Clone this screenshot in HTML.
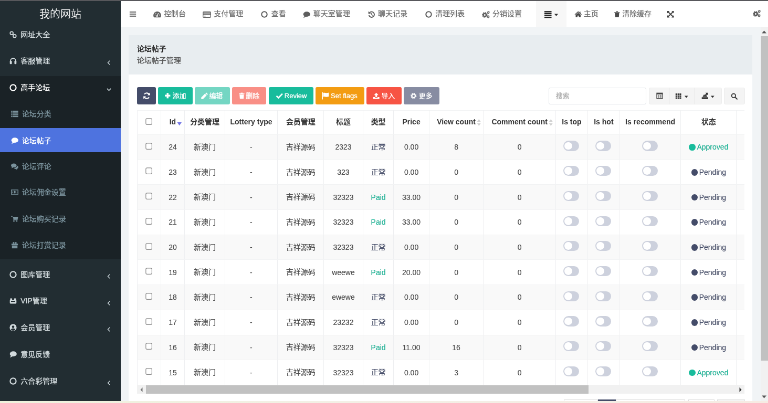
<!DOCTYPE html>
<html lang="zh-CN"><head><meta charset="utf-8"><title>我的网站</title>
<style>
*{box-sizing:border-box;margin:0;padding:0}
html,body{width:768px;height:403px;overflow:hidden;background:#fff}
body{font-family:"Liberation Sans","Noto Sans CJK SC",sans-serif;font-size:14px;color:#444;position:relative;text-shadow:0 0 0.9px currentColor}
#topline{position:absolute;left:0;top:0;width:768px;height:1px;background:#58585c;z-index:5}
#bottom{position:absolute;left:0;top:400.7px;width:768px;height:2.3px;background:linear-gradient(90deg,#eef1dc 0%,#f3f0e6 45%,#f6ebe3 100%);z-index:5}
#w{position:absolute;left:0;top:1px;width:1462.86px;height:761.4px;transform:scale(0.525);transform-origin:0 0;overflow:hidden;background:#f1f4f6;will-change:transform}
.i{display:block;position:absolute}
.abs{position:absolute;white-space:nowrap}
#side{position:absolute;left:0;top:0;width:230px;height:761.4px;background:#222d32;overflow:hidden}
#logo{position:absolute;left:0;top:0;width:230px;height:50px;line-height:50px;text-align:center;color:#fff;font-size:20px;font-weight:300}
#sub{position:absolute;left:0;width:230px;background:#1a2226}
#act{position:absolute;left:0;width:230px;background:#4e73df}
.m{position:absolute;left:0;width:230px;height:20px;line-height:20px;font-size:14px;color:#cfd8dc}
.m .t{position:absolute;left:39.2px;top:0;white-space:nowrap}
.m .i{left:18.3px;top:3px}
.m .ch{left:200px;top:4px;color:#b8c7ce}
.s{color:#7a929c}
.s .t{left:41.7px}
.s .i{left:21px}
#nav{position:absolute;left:230px;top:0;width:1233px;height:50px;background:#fff}
#nav .n{position:absolute;top:14.3px;height:20px;line-height:20px;color:#6e6e6e;text-shadow:0 0 0.7px #888;font-size:14px;white-space:nowrap}
#nav .i{top:18px;color:#5e5e5e}
#vs{position:absolute;top:50px;background:#f1f1f1}
#panel{position:absolute;background:#fff}
#ph{position:absolute;left:0;top:0;width:100%;background:#e8edf0}
.btn{position:absolute;border-radius:3px;color:#fff;font-size:13px;line-height:20px;white-space:nowrap}
.btn .t{position:absolute;top:6.8px}
.btn .i{top:10px}
.tb{position:absolute;background:#f4f4f4;border:1px solid #ececec;color:#333}
table{border-collapse:collapse;table-layout:fixed;position:absolute}
th,td{border:1px solid #eeeff1;border-top-color:#f2f3f4;border-bottom-color:#f2f3f4;text-align:center;vertical-align:middle;white-space:nowrap;overflow:hidden;font-size:14px;padding:0;position:relative}
th{font-weight:bold;color:#333;background:#fff;padding-bottom:3px;text-shadow:none}
td .cb{top:-3.2px}
.hs{position:relative;display:inline-block}
.c{position:relative;top:-1.4px}
td{color:#4d4d4d;text-shadow:0 0 0.5px #999}
tr.o td{background:#f9f9f9}
tr.e td{background:#fff}
.cb{display:inline-block;vertical-align:middle;position:relative;top:-2px}
.tg{display:inline-block;width:30.5px;height:19.2px;border-radius:10px;background:#cdd1dd;position:relative;vertical-align:middle;top:-2.2px;left:-0.8px}
.tg b{position:absolute;left:2.2px;top:2.2px;width:14.8px;height:14.8px;border-radius:50%;background:#fff}
.dot{display:inline-block;width:12.6px;height:12.6px;border-radius:50%;vertical-align:middle;margin-right:2.6px;position:relative;top:-1px}
.ok{color:#18bc9c}.ok .dot{background:#18bc9c}
.pd{color:#444c69}.pd .dot{background:#444c69}
.nm{color:#444c69}.paid{color:#18bc9c}
.so{display:inline-block;position:relative;width:0;height:0}
</style></head><body>
<div id="topline"></div><div id="bottom"></div>
<div id="w">

<div id="side">
<div id="logo">我的网站</div>
<div id="sub" style="top:142.67px;height:348.95px"></div>
<div id="act" style="top:242.29px;height:45.9px"></div>
<div class="m" style="top:54.0px;color:#d2dadd"><svg class="i" width="14" height="14" viewBox="0 0 16 16" style=""><g fill="none" stroke="currentColor" stroke-width="2"><circle cx="4.8" cy="4.8" r="3.3"/><circle cx="11.2" cy="11.2" r="3.3"/><path d="M6.5 6.5L9.5 9.5"/></g></svg><span class="t">网址大全</span></div>
<div class="m" style="top:104.29px;color:#d2dadd"><svg class="i" width="14" height="14" viewBox="0 0 16 16" style=""><path d="M2.3 11V8.2a5.7 5.7 0 0 1 11.4 0V11" fill="none" stroke="currentColor" stroke-width="2.2"/><rect x="0.8" y="8.2" width="4.4" height="6.8" rx="1.2" fill="currentColor"/><rect x="10.8" y="8.2" width="4.4" height="6.8" rx="1.2" fill="currentColor"/></svg><span class="t">客服管理</span><svg class="i" width="13" height="13" viewBox="0 0 16 16" style="left:200.8px;top:7.2px;color:#c5d0d5"><path d="M10 3.5L5.5 8L10 12.5" fill="none" stroke="currentColor" stroke-width="1.8"/></svg></div>
<div class="m" style="top:155.14px;color:#fff"><svg class="i" width="14" height="14" viewBox="0 0 16 16" style=""><circle cx="8" cy="8" r="6.4" fill="none" stroke="currentColor" stroke-width="2.5"/></svg><span class="t">高手论坛</span><svg class="i" width="13" height="13" viewBox="0 0 16 16" style="left:200.8px;top:7.2px;color:#c5d0d5"><path d="M3.5 6L8 10.5L12.5 6" fill="none" stroke="currentColor" stroke-width="1.8"/></svg></div>
<div class="m" style="top:510.57000000000005px;color:#d2dadd"><svg class="i" width="14" height="14" viewBox="0 0 16 16" style=""><circle cx="8" cy="8" r="6.4" fill="none" stroke="currentColor" stroke-width="2.5"/></svg><span class="t">图库管理</span><svg class="i" width="13" height="13" viewBox="0 0 16 16" style="left:200.8px;top:7.2px;color:#c5d0d5"><path d="M10 3.5L5.5 8L10 12.5" fill="none" stroke="currentColor" stroke-width="1.8"/></svg></div>
<div class="m" style="top:561.43px;color:#d2dadd"><svg class="i" width="14" height="14" viewBox="0 0 16 16" style=""><g fill="currentColor"><rect x="0.8" y="6" width="14.4" height="8.2" rx="1.6"/><rect x="1.6" y="2.8" width="4.2" height="4"/><rect x="10.2" y="2.8" width="4.2" height="4"/></g><rect x="3.4" y="8" width="9.2" height="2.4" fill="#222d32"/></svg><span class="t">VIP管理</span><svg class="i" width="13" height="13" viewBox="0 0 16 16" style="left:200.8px;top:7.2px;color:#c5d0d5"><path d="M10 3.5L5.5 8L10 12.5" fill="none" stroke="currentColor" stroke-width="1.8"/></svg></div>
<div class="m" style="top:611.71px;color:#d2dadd"><svg class="i" width="14" height="14" viewBox="0 0 16 16" style=""><circle cx="8" cy="8" r="7.6" fill="currentColor"/><circle cx="8" cy="6.3" r="2.7" fill="#222d32"/><path d="M3.2 12.6a4.9 3.6 0 0 1 9.6 0a6.4 6.4 0 0 1 -9.6 0z" fill="#222d32"/></svg><span class="t">会员管理</span><svg class="i" width="13" height="13" viewBox="0 0 16 16" style="left:200.8px;top:7.2px;color:#c5d0d5"><path d="M10 3.5L5.5 8L10 12.5" fill="none" stroke="currentColor" stroke-width="1.8"/></svg></div>
<div class="m" style="top:662.57px;color:#d2dadd"><svg class="i" width="14" height="14" viewBox="0 0 16 16" style=""><g fill="currentColor"><ellipse cx="8.3" cy="7" rx="7.5" ry="5.6"/><path d="M3.5 10.5L1 15L7.5 12.2z"/></g></svg><span class="t">意见反馈</span></div>
<div class="m" style="top:714.19px;color:#d2dadd"><svg class="i" width="14" height="14" viewBox="0 0 16 16" style=""><circle cx="8" cy="8" r="6.4" fill="none" stroke="currentColor" stroke-width="2.5"/></svg><span class="t">六合彩管理</span><svg class="i" width="13" height="13" viewBox="0 0 16 16" style="left:200.8px;top:7.2px;color:#c5d0d5"><path d="M10 3.5L5.5 8L10 12.5" fill="none" stroke="currentColor" stroke-width="1.8"/></svg></div>
<div class="m s" style="top:205.05px;"><svg class="i" width="14" height="14" viewBox="0 0 16 16" style=""><g fill="currentColor"><rect x="0.3" y="1.0" width="3" height="2.6"/><rect x="4.6" y="1.0" width="11.1" height="2.6"/><rect x="0.3" y="4.8" width="3" height="2.6"/><rect x="4.6" y="4.8" width="11.1" height="2.6"/><rect x="0.3" y="8.6" width="3" height="2.6"/><rect x="4.6" y="8.6" width="11.1" height="2.6"/><rect x="0.3" y="12.4" width="3" height="2.6"/><rect x="4.6" y="12.4" width="11.1" height="2.6"/></g></svg><span class="t">论坛分类</span></div>
<div class="m s" style="top:255.51999999999998px;color:#fff"><svg class="i" width="14" height="14" viewBox="0 0 16 16" style=""><g fill="currentColor"><ellipse cx="8.3" cy="7" rx="7.5" ry="5.6"/><path d="M3.5 10.5L1 15L7.5 12.2z"/></g></svg><span class="t">论坛帖子</span></div>
<div class="m s" style="top:305.24px;"><svg class="i" width="14" height="14" viewBox="0 0 16 16" style=""><g fill="currentColor"><ellipse cx="6" cy="6" rx="6" ry="4.4"/><path d="M2.5 8.5L0.8 12.3L5.5 10z"/><path d="M13.2 6.2a5 3.9 0 0 1 -0.8 7.2L13.5 15.5L9.8 13.6a5.6 3.9 0 0 1 -3.5-2.2a7.5 5.5 0 0 0 6.9-5.2z"/></g></svg><span class="t">论坛评论</span></div>
<div class="m s" style="top:354.38px;"><svg class="i" width="14" height="14" viewBox="0 0 16 16" style=""><rect x="0.8" y="3.3" width="14.4" height="9.4" fill="none" stroke="currentColor" stroke-width="1.6"/><ellipse cx="8" cy="8" rx="2.1" ry="2.8" fill="currentColor"/><rect x="2" y="6.8" width="1.6" height="2.4" fill="currentColor"/><rect x="12.4" y="6.8" width="1.6" height="2.4" fill="currentColor"/></svg><span class="t">论坛佣金设置</span></div>
<div class="m s" style="top:405.43px;"><svg class="i" width="14" height="14" viewBox="0 0 16 16" style=""><g fill="currentColor"><path d="M0 1.8h3.2l0.5 1.7H15.6l-1.4 6.2H5.6L3.8 3.2H0z"/><circle cx="6.2" cy="12.8" r="1.5"/><circle cx="12.4" cy="12.8" r="1.5"/><rect x="4.6" y="9.6" width="9.8" height="1.4"/></g></svg><span class="t">论坛购买记录</span></div>
<div class="m s" style="top:454.76px;"><svg class="i" width="14" height="14" viewBox="0 0 16 16" style=""><g fill="currentColor"><rect x="1" y="4.8" width="14" height="3.4"/><rect x="2" y="8.8" width="12" height="6.2"/><circle cx="5.6" cy="3" r="1.9"/><circle cx="10.4" cy="3" r="1.9"/></g></svg><span class="t">论坛打赏记录</span></div>
</div>
<div id="nav">
<svg class="i" width="14" height="14" viewBox="0 0 16 16" style="left:16.1px;top:18px;color:#777"><g fill="currentColor"><rect x="1" y="2.2" width="14" height="2.6"/><rect x="1" y="6.7" width="14" height="2.6"/><rect x="1" y="11.2" width="14" height="2.6"/></g></svg>
<svg class="i" width="15" height="15" viewBox="0 0 16 16" style="left:62.0px;top:18.0px"><path d="M8 2.2a7.8 7.8 0 0 0 -6.6 11.9h13.2A7.8 7.8 0 0 0 8 2.2z" fill="currentColor"/><path d="M7.6 11.4L10.4 5.4" stroke="#fff" stroke-width="1.5" fill="none"/><circle cx="7.6" cy="11.2" r="1.7" fill="#fff"/><circle cx="3.6" cy="9.2" r="0.9" fill="#fff"/><circle cx="5.2" cy="5.6" r="0.9" fill="#fff"/><circle cx="12.5" cy="9.2" r="0.9" fill="#fff"/></svg>
<span class="n" style="left:82.0px">控制台</span>
<svg class="i" width="16" height="16" viewBox="0 0 16 16" style="left:156.29px;top:17.5px"><rect x="0.8" y="2.6" width="14.4" height="10.8" rx="1.4" fill="none" stroke="currentColor" stroke-width="1.3"/><rect x="0.8" y="2.6" width="14.4" height="1.6" fill="currentColor"/><rect x="0.8" y="5.6" width="14.4" height="2.4" fill="currentColor"/><rect x="2.6" y="10" width="3" height="1.3" fill="currentColor"/></svg>
<span class="n" style="left:177.24px">支付管理</span>
<svg class="i" width="13" height="13" viewBox="0 0 16 16" style="left:266.76px;top:19.0px"><circle cx="8" cy="8" r="6.4" fill="none" stroke="currentColor" stroke-width="2.5"/></svg>
<span class="n" style="left:286.76px">查看</span>
<svg class="i" width="14" height="14" viewBox="0 0 16 16" style="left:347.14px;top:18.5px"><g fill="currentColor"><ellipse cx="8.3" cy="7" rx="7.5" ry="5.6"/><path d="M3.5 10.5L1 15L7.5 12.2z"/></g></svg>
<span class="n" style="left:366.76px">聊天室管理</span>
<svg class="i" width="13.5" height="13.5" viewBox="0 0 16 16" style="left:470.57px;top:18.75px"><path d="M3.6 3.6A6.2 6.2 0 1 1 2 9.6" fill="none" stroke="currentColor" stroke-width="2.3"/><path d="M0.6 0.8L1 6.8L6.8 5.4z" fill="currentColor"/><path d="M8.2 4.6V8.4L10.6 10" fill="none" stroke="currentColor" stroke-width="1.7"/></svg>
<span class="n" style="left:490.0px">聊天记录</span>
<svg class="i" width="13" height="13" viewBox="0 0 16 16" style="left:579.52px;top:19.0px"><circle cx="8" cy="8" r="6.4" fill="none" stroke="currentColor" stroke-width="2.5"/></svg>
<span class="n" style="left:599.14px">清理列表</span>
<svg class="i" width="15.5" height="15.5" viewBox="0 0 16 16" style="left:687.52px;top:17.75px"><circle cx="5.5" cy="8.8" r="2.95" fill="none" stroke="currentColor" stroke-width="2.6"/><circle cx="5.5" cy="8.8" r="4.7" fill="none" stroke="currentColor" stroke-width="1.6" stroke-dasharray="1.95 1.74"/><circle cx="12.5" cy="4" r="1.5" fill="none" stroke="currentColor" stroke-width="1.4"/><circle cx="12.5" cy="4" r="2.5" fill="none" stroke="currentColor" stroke-width="1" stroke-dasharray="1.35 1.27"/><circle cx="12.5" cy="12.3" r="1.5" fill="none" stroke="currentColor" stroke-width="1.4"/><circle cx="12.5" cy="12.3" r="2.5" fill="none" stroke="currentColor" stroke-width="1" stroke-dasharray="1.35 1.27"/></svg>
<span class="n" style="left:708.1px">分销设置</span>
<div class="abs" style="left:791.33px;top:0;width:58.1px;height:50px;background:#f7f7f7"></div>
<svg class="i" width="15.5" height="15.5" viewBox="0 0 16 16" style="left:805.62px;top:18.3px;color:#222"><g fill="currentColor"><rect x="1" y="1.2" width="14" height="2.5"/><rect x="1" y="4.9" width="14" height="2.5"/><rect x="1" y="8.6" width="14" height="2.5"/><rect x="1" y="12.3" width="14" height="2.5"/></g></svg>
<svg class="i" width="9" height="9" viewBox="0 0 16 16" style="left:825.12px;top:21.5px;color:#333"><path d="M1.5 4.5h13L8 12z" fill="currentColor"/></svg>
<svg class="i" width="14.5" height="14.5" viewBox="0 0 16 16" style="left:864.48px;top:18px;color:#444"><g fill="currentColor"><path d="M8 1.6L0.6 8.2L1.6 9.3L8 3.8L14.4 9.3L15.4 8.2L12.8 5.9V2.6h-1.8v1.7z"/><path d="M8 5L2.8 9.4V14.4h3.8v-3.6h2.8v3.6h3.8V9.4z"/></g></svg>
<span class="n" style="left:881.81px">主页</span>
<svg class="i" width="12.6" height="12.6" viewBox="0 0 16 16" style="left:939.33px;top:18.6px;color:#4a4a4a"><g fill="currentColor"><rect x="1.6" y="2.6" width="12.8" height="1.8"/><rect x="5.6" y="0.8" width="4.8" height="2.2"/><path d="M2.8 5.2h10.4l-0.8 10H3.6z"/></g></svg>
<span class="n" style="left:955.14px">清除缓存</span>
<svg class="i" width="14.5" height="14.5" viewBox="0 0 16 16" style="left:1039.71px;top:18px;color:#444"><g fill="currentColor"><path d="M1 1h5L4.3 2.7L8 6.4L11.7 2.7L10 1H15v5L13.3 4.3L9.6 8L13.3 11.7L15 10V15H10l1.7-1.7L8 9.6L4.3 13.3L6 15H1V10l1.7 1.7L6.4 8L2.7 4.3L1 6z"/></g></svg>
<svg class="i" width="15.5" height="15.5" viewBox="0 0 16 16" style="left:1204.29px;top:16.3px;color:#555"><circle cx="5.5" cy="8.8" r="2.95" fill="none" stroke="currentColor" stroke-width="2.6"/><circle cx="5.5" cy="8.8" r="4.7" fill="none" stroke="currentColor" stroke-width="1.6" stroke-dasharray="1.95 1.74"/><circle cx="12.5" cy="4" r="1.5" fill="none" stroke="currentColor" stroke-width="1.4"/><circle cx="12.5" cy="4" r="2.5" fill="none" stroke="currentColor" stroke-width="1" stroke-dasharray="1.35 1.27"/><circle cx="12.5" cy="12.3" r="1.5" fill="none" stroke="currentColor" stroke-width="1.4"/><circle cx="12.5" cy="12.3" r="2.5" fill="none" stroke="currentColor" stroke-width="1" stroke-dasharray="1.35 1.27"/></svg>
</div>
<div id="vs" style="left:1448.57px;width:14.29px;height:711.4px"></div>
<div class="abs" style="left:1449.33px;top:66.86px;width:20px;height:618.48px;background:#c1c1c1"></div>
<svg class="i" style="left:1451.43px;top:55.62px" width="9" height="6" viewBox="0 0 9 6"><path d="M0 5.5L4.5 0.5L9 5.5z" fill="#555"/></svg>
<svg class="i" style="left:1451.43px;top:751.05px" width="9" height="6" viewBox="0 0 9 6"><path d="M0 0.5L4.5 5.5L9 0.5z" fill="#555"/></svg>
<div id="panel" style="left:245.14px;top:64.76px;width:1187.43px;height:760px">
<div id="ph" style="height:74.86px"></div>
<div class="abs" style="left:15.62px;top:16.29px;line-height:20px;font-weight:bold;color:#2c2c2c;font-size:14px;text-shadow:none">论坛帖子</div>
<div class="abs" style="left:15.62px;top:38.19px;line-height:20px;color:#555;font-size:14px">论坛帖子管理</div>
<div class="btn" style="left:15.81px;top:99.62px;width:36.57px;height:33.14px;background:#444c69"><svg class="i" width="15.01" height="15.01" viewBox="0 0 16 16" style="left:10.87px;top:8.67px"><path d="M13.2 6.2A5.6 5.6 0 0 0 3.2 5" fill="none" stroke="currentColor" stroke-width="2.3"/><path d="M2.8 9.8A5.6 5.6 0 0 0 12.8 11" fill="none" stroke="currentColor" stroke-width="2.3"/><path d="M14.8 1.6V7H9.4z" fill="currentColor"/><path d="M1.2 14.4V9H6.6z" fill="currentColor"/></svg></div>
<div class="btn" style="left:56.19px;top:99.62px;width:66.1px;height:33.14px;background:#18bc9c"><svg class="i" width="12.47" height="12.47" viewBox="0 0 16 16" style="left:11.68px;top:9.94px"><g fill="currentColor"><rect x="5.8" y="1.4" width="4.4" height="13.2"/><rect x="1.4" y="5.8" width="13.2" height="4.4"/></g></svg><span class="t" style="left:27.24px">添加</span></div>
<div class="btn" style="left:126.29px;top:99.62px;width:66.67px;height:33.14px;background:#74d6c3"><svg class="i" width="15.24" height="15.24" viewBox="0 0 16 16" style="left:10.67px;top:8.55px"><g fill="currentColor"><path d="M11.4 1.2L14.8 4.6L13 6.4L9.6 3z"/><path d="M8.8 3.8L12.2 7.2L5 14.4L1.2 14.8L1.6 11z"/></g></svg><span class="t" style="left:27.05px">编辑</span></div>
<div class="btn" style="left:196.76px;top:99.62px;width:65.52px;height:33.14px;background:#f98f86"><svg class="i" width="12.86" height="12.86" viewBox="0 0 16 16" style="left:11.67px;top:9.74px"><g fill="currentColor"><rect x="1.6" y="2.6" width="12.8" height="1.8"/><rect x="5.6" y="0.8" width="4.8" height="2.2"/><path d="M2.8 5.2h10.4l-0.8 10H3.6z"/></g></svg><span class="t" style="left:26.29px">删除</span></div>
<div class="btn" style="left:266.67px;top:99.62px;width:84.76px;height:33.14px;background:#18bc9c"><svg class="i" width="14.42" height="14.42" viewBox="0 0 16 16" style="left:12.79px;top:8.96px"><path d="M1.8 8.6L6 12.6L14.4 4" fill="none" stroke="currentColor" stroke-width="3"/></svg><span class="t" style="left:30.09px">Review</span></div>
<div class="btn" style="left:355.43px;top:99.62px;width:93.33px;height:33.14px;background:#f39c12"><svg class="i" width="15.24" height="15.24" viewBox="0 0 16 16" style="left:11.43px;top:8.55px"><g fill="currentColor"><rect x="1.4" y="1" width="1.8" height="14.2"/><path d="M3.8 2.2c3-1.6 5 1.4 11.2-0.6v7.8c-6 2.2-8.2-1-11.2 0.8z"/></g></svg><span class="t" style="left:29.53px">Set flags</span></div>
<div class="btn" style="left:452.57px;top:99.62px;width:67.43px;height:33.14px;background:#f75444"><svg class="i" width="13.33" height="13.33" viewBox="0 0 16 16" style="left:12.48px;top:9.51px"><g fill="currentColor"><path d="M8 0.8L13 6.2H9.9V10.4H6.1V6.2H3z"/><path d="M0.8 10.8h4.2v1.6h6v-1.6h4.2v4.4H0.8z"/></g></svg><span class="t" style="left:28.58px">导入</span></div>
<div class="btn" style="left:524.0px;top:99.62px;width:67.43px;height:33.14px;background:#878ca2"><svg class="i" width="13.45" height="13.45" viewBox="0 0 16 16" style="left:12.33px;top:9.45px"><circle cx="8" cy="8" r="5.4" fill="none" stroke="currentColor" stroke-width="2.6" stroke-dasharray="2.2 2.04"/><circle cx="8" cy="8" r="3.9" fill="none" stroke="currentColor" stroke-width="2.6"/></svg><span class="t" style="left:28.57px">更多</span></div>
<div class="abs" style="left:800.19px;top:99.81px;width:185.52px;height:32.95px;border:1px solid #dfe3e8;border-radius:3px;background:#fff"><span class="abs" style="left:12.33px;top:5.5px;line-height:20px;font-size:13px;color:#a9a9a9">搜索</span></div>
<div class="tb" style="left:990.48px;top:99.81px;width:139.05px;height:32.95px;border-radius:3px"></div>
<div class="abs" style="left:1028.57px;top:99.81px;width:1px;height:32.95px;background:#e2e2e2"></div>
<div class="abs" style="left:1078.1px;top:99.81px;width:1px;height:32.95px;background:#e2e2e2"></div>
<svg class="i" width="13" height="13" viewBox="0 0 16 16" style="left:1004.55px;top:108.985px;color:#444"><rect x="1.2" y="1.6" width="13.6" height="12.8" fill="none" stroke="currentColor" stroke-width="1.6"/><rect x="1.2" y="1.6" width="13.6" height="3.2" fill="currentColor"/><rect x="3.6" y="6" width="3.6" height="7" fill="currentColor" opacity=".55"/><rect x="8.6" y="6" width="3.8" height="7" fill="currentColor" opacity=".55"/></svg>
<svg class="i" width="12.5" height="12.5" viewBox="0 0 16 16" style="left:1041.15px;top:110.035px;color:#333"><g fill="currentColor"><rect x="1.0" y="1.4" width="4" height="3.8"/><rect x="5.9" y="1.4" width="4" height="3.8"/><rect x="10.8" y="1.4" width="4" height="3.8"/><rect x="1.0" y="6.1" width="4" height="3.8"/><rect x="5.9" y="6.1" width="4" height="3.8"/><rect x="10.8" y="6.1" width="4" height="3.8"/><rect x="1.0" y="10.8" width="4" height="3.8"/><rect x="5.9" y="10.8" width="4" height="3.8"/><rect x="10.8" y="10.8" width="4" height="3.8"/></g></svg>
<svg class="i" width="8.5" height="8.5" viewBox="0 0 16 16" style="left:1057.85px;top:112.785px;color:#333"><path d="M1.5 4.5h13L8 12z" fill="currentColor"/></svg>
<svg class="i" width="13.5" height="13.5" viewBox="0 0 16 16" style="left:1090.48px;top:109.285px;color:#333"><g fill="currentColor"><rect x="0.8" y="11" width="14.4" height="4.2"/><path d="M2.6 10.4L5.2 5.4h5.6l2.6 5z" opacity=".9"/><path d="M9 1h5.6v5.6l-1.9-1.9L9.4 8L7.6 6.2l3.3-3.3z"/></g></svg>
<svg class="i" width="8.5" height="8.5" viewBox="0 0 16 16" style="left:1107.75px;top:112.785px;color:#333"><path d="M1.5 4.5h13L8 12z" fill="currentColor"/></svg>
<div class="tb" style="left:1133.53px;top:99.81px;width:40.38px;height:32.95px;border-radius:3px"></div>
<svg class="i" width="13" height="13" viewBox="0 0 16 16" style="left:1147.03px;top:109.785px;color:#333"><circle cx="6.6" cy="6.6" r="4.6" fill="none" stroke="currentColor" stroke-width="2.2"/><path d="M10 10L14.6 14.6" fill="none" stroke="currentColor" stroke-width="2.6" stroke-linecap="round"/></svg>
<div class="abs" style="left:16.0px;top:143.43px;width:1156.95px;height:523.8100000000001px;overflow:hidden">
<table style="left:0;top:0;width:1243.62px"><colgroup>
<col style="width:44.38px">
<col style="width:45.9px">
<col style="width:76.38px">
<col style="width:100.38px">
<col style="width:88.0px">
<col style="width:74.67px">
<col style="width:58.67px">
<col style="width:67.24px">
<col style="width:103.81px">
<col style="width:137.52px">
<col style="width:60.95px">
<col style="width:60.95px">
<col style="width:116.38px">
<col style="width:106.1px">
<col style="width:102.29px">
</colgroup>
<tr style="height:45.71px">
<th><svg class="cb" width="13.2" height="13.2" viewBox="0 0 14 14"><rect x="0.9" y="0.9" width="12.2" height="12.2" rx="2.4" fill="#fff" stroke="#8a8a8a" stroke-width="1.25"/></svg></th>
<th><span class="hs">Id<svg style="position:absolute;left:100%;margin-left:2.2px;top:50%;margin-top:0.4px" width="9.5" height="8" viewBox="0 0 8 7"><path d="M0.3 0.8L4 6.4L7.7 0.8z" fill="#7376e6"/></svg></span></th>
<th><span class="c">分类管理</span></th>
<th>Lottery type</th>
<th><span class="c">会员管理</span></th>
<th><span class="c">标题</span></th>
<th><span class="c">类型</span></th>
<th>Price</th>
<th><span class="hs">View count<svg style="position:absolute;left:100%;margin-left:1.8px;top:50%;margin-top:-6.5px" width="8.5" height="15" viewBox="0 0 7 13"><path d="M0.5 5.2L3.5 0.8L6.5 5.2z" fill="#d2d2d2"/><path d="M0.5 7.8L3.5 12.2L6.5 7.8z" fill="#d2d2d2"/></svg></span></th>
<th><span class="hs">Comment count<svg style="position:absolute;left:100%;margin-left:1.8px;top:50%;margin-top:-6.5px" width="8.5" height="15" viewBox="0 0 7 13"><path d="M0.5 5.2L3.5 0.8L6.5 5.2z" fill="#d2d2d2"/><path d="M0.5 7.8L3.5 12.2L6.5 7.8z" fill="#d2d2d2"/></svg></span></th>
<th>Is top</th>
<th>Is hot</th>
<th>Is recommend</th>
<th><span class="c">状态</span></th>
<th></th>
</tr>
<tr class="o" style="height:47.71px"><td><svg class="cb" width="13.2" height="13.2" viewBox="0 0 14 14"><rect x="0.9" y="0.9" width="12.2" height="12.2" rx="2.4" fill="#fff" stroke="#8a8a8a" stroke-width="1.25"/></svg></td><td>24</td><td><span class="c">新澳门</span></td><td>-</td><td><span class="c">吉祥源码</span></td><td>2323</td><td><span class="nm c">正常</span></td><td>0.00</td><td>8</td><td>0</td><td><span class="tg"><b></b></span></td><td><span class="tg"><b></b></span></td><td><span class="tg"><b></b></span></td><td><span class="ok"><i class="dot"></i>Approved</span></td><td></td></tr>
<tr class="e" style="height:47.71px"><td><svg class="cb" width="13.2" height="13.2" viewBox="0 0 14 14"><rect x="0.9" y="0.9" width="12.2" height="12.2" rx="2.4" fill="#fff" stroke="#8a8a8a" stroke-width="1.25"/></svg></td><td>23</td><td><span class="c">新澳门</span></td><td>-</td><td><span class="c">吉祥源码</span></td><td>323</td><td><span class="nm c">正常</span></td><td>0.00</td><td>0</td><td>0</td><td><span class="tg"><b></b></span></td><td><span class="tg"><b></b></span></td><td><span class="tg"><b></b></span></td><td><span class="pd"><i class="dot"></i>Pending</span></td><td></td></tr>
<tr class="o" style="height:47.71px"><td><svg class="cb" width="13.2" height="13.2" viewBox="0 0 14 14"><rect x="0.9" y="0.9" width="12.2" height="12.2" rx="2.4" fill="#fff" stroke="#8a8a8a" stroke-width="1.25"/></svg></td><td>22</td><td><span class="c">新澳门</span></td><td>-</td><td><span class="c">吉祥源码</span></td><td>32323</td><td><span class="paid">Paid</span></td><td>33.00</td><td>0</td><td>0</td><td><span class="tg"><b></b></span></td><td><span class="tg"><b></b></span></td><td><span class="tg"><b></b></span></td><td><span class="pd"><i class="dot"></i>Pending</span></td><td></td></tr>
<tr class="e" style="height:47.71px"><td><svg class="cb" width="13.2" height="13.2" viewBox="0 0 14 14"><rect x="0.9" y="0.9" width="12.2" height="12.2" rx="2.4" fill="#fff" stroke="#8a8a8a" stroke-width="1.25"/></svg></td><td>21</td><td><span class="c">新澳门</span></td><td>-</td><td><span class="c">吉祥源码</span></td><td>32323</td><td><span class="paid">Paid</span></td><td>33.00</td><td>0</td><td>0</td><td><span class="tg"><b></b></span></td><td><span class="tg"><b></b></span></td><td><span class="tg"><b></b></span></td><td><span class="pd"><i class="dot"></i>Pending</span></td><td></td></tr>
<tr class="o" style="height:47.71px"><td><svg class="cb" width="13.2" height="13.2" viewBox="0 0 14 14"><rect x="0.9" y="0.9" width="12.2" height="12.2" rx="2.4" fill="#fff" stroke="#8a8a8a" stroke-width="1.25"/></svg></td><td>20</td><td><span class="c">新澳门</span></td><td>-</td><td><span class="c">吉祥源码</span></td><td>32323</td><td><span class="nm c">正常</span></td><td>0.00</td><td>0</td><td>0</td><td><span class="tg"><b></b></span></td><td><span class="tg"><b></b></span></td><td><span class="tg"><b></b></span></td><td><span class="pd"><i class="dot"></i>Pending</span></td><td></td></tr>
<tr class="e" style="height:47.71px"><td><svg class="cb" width="13.2" height="13.2" viewBox="0 0 14 14"><rect x="0.9" y="0.9" width="12.2" height="12.2" rx="2.4" fill="#fff" stroke="#8a8a8a" stroke-width="1.25"/></svg></td><td>19</td><td><span class="c">新澳门</span></td><td>-</td><td><span class="c">吉祥源码</span></td><td>weewe</td><td><span class="paid">Paid</span></td><td>20.00</td><td>0</td><td>0</td><td><span class="tg"><b></b></span></td><td><span class="tg"><b></b></span></td><td><span class="tg"><b></b></span></td><td><span class="pd"><i class="dot"></i>Pending</span></td><td></td></tr>
<tr class="o" style="height:47.71px"><td><svg class="cb" width="13.2" height="13.2" viewBox="0 0 14 14"><rect x="0.9" y="0.9" width="12.2" height="12.2" rx="2.4" fill="#fff" stroke="#8a8a8a" stroke-width="1.25"/></svg></td><td>18</td><td><span class="c">新澳门</span></td><td>-</td><td><span class="c">吉祥源码</span></td><td>ewewe</td><td><span class="nm c">正常</span></td><td>0.00</td><td>0</td><td>0</td><td><span class="tg"><b></b></span></td><td><span class="tg"><b></b></span></td><td><span class="tg"><b></b></span></td><td><span class="pd"><i class="dot"></i>Pending</span></td><td></td></tr>
<tr class="e" style="height:47.71px"><td><svg class="cb" width="13.2" height="13.2" viewBox="0 0 14 14"><rect x="0.9" y="0.9" width="12.2" height="12.2" rx="2.4" fill="#fff" stroke="#8a8a8a" stroke-width="1.25"/></svg></td><td>17</td><td><span class="c">新澳门</span></td><td>-</td><td><span class="c">吉祥源码</span></td><td>23232</td><td><span class="nm c">正常</span></td><td>0.00</td><td>0</td><td>0</td><td><span class="tg"><b></b></span></td><td><span class="tg"><b></b></span></td><td><span class="tg"><b></b></span></td><td><span class="pd"><i class="dot"></i>Pending</span></td><td></td></tr>
<tr class="o" style="height:47.71px"><td><svg class="cb" width="13.2" height="13.2" viewBox="0 0 14 14"><rect x="0.9" y="0.9" width="12.2" height="12.2" rx="2.4" fill="#fff" stroke="#8a8a8a" stroke-width="1.25"/></svg></td><td>16</td><td><span class="c">新澳门</span></td><td>-</td><td><span class="c">吉祥源码</span></td><td>32323</td><td><span class="paid">Paid</span></td><td>11.00</td><td>16</td><td>0</td><td><span class="tg"><b></b></span></td><td><span class="tg"><b></b></span></td><td><span class="tg"><b></b></span></td><td><span class="pd"><i class="dot"></i>Pending</span></td><td></td></tr>
<tr class="e" style="height:47.71px"><td><svg class="cb" width="13.2" height="13.2" viewBox="0 0 14 14"><rect x="0.9" y="0.9" width="12.2" height="12.2" rx="2.4" fill="#fff" stroke="#8a8a8a" stroke-width="1.25"/></svg></td><td>15</td><td><span class="c">新澳门</span></td><td>-</td><td><span class="c">吉祥源码</span></td><td>32323</td><td><span class="nm c">正常</span></td><td>0.00</td><td>3</td><td>0</td><td><span class="tg"><b></b></span></td><td><span class="tg"><b></b></span></td><td><span class="tg"><b></b></span></td><td><span class="ok"><i class="dot"></i>Approved</span></td><td></td></tr>
</table></div>
<div class="abs" style="left:16.0px;top:667.24px;width:1156.95px;height:16.38px;background:#f1f1f1"></div>
<div class="abs" style="left:32.57px;top:667.24px;width:842.86px;height:16.38px;background:#c1c1c1"></div>
<svg class="i" style="left:21.91px;top:670.93px" width="5" height="9" viewBox="0 0 5 9"><path d="M4.5 0L0.5 4.5L4.5 9z" fill="#777"/></svg>
<svg class="i" style="left:1162.86px;top:670.93px" width="5" height="9" viewBox="0 0 5 9"><path d="M0.5 0L4.5 4.5L0.5 9z" fill="#333"/></svg>
<div class="abs" style="left:828.57px;top:694.67px;width:65.14px;height:30px;background:#fff;border:1px solid #ddd"></div>
<div class="abs" style="left:893.72px;top:694.67px;width:33.9px;height:30px;background:#444c69;border:1px solid #444c69"></div>
<div class="abs" style="left:927.62px;top:694.67px;width:132.76px;height:30px;background:#fff;border:1px solid #ddd"></div>
<div class="abs" style="left:1066.1px;top:694.67px;width:49.71px;height:30px;background:#fff;border:1px solid #ddd"></div>
<div class="abs" style="left:1120.57px;top:694.67px;width:53.33px;height:30px;background:#f4f4f4;border:1px solid #ddd"></div>
</div>
</div></body></html>
